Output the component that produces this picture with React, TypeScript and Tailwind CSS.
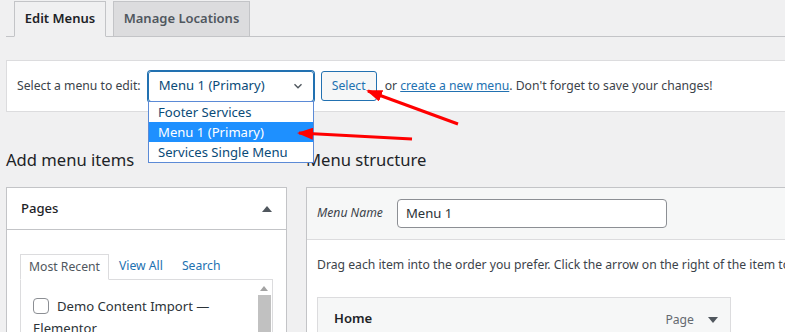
import React from 'react';

const TriUp = () => (
  <svg width="10" height="6" viewBox="0 0 10 6">
    <path d="M0 6 L5 0 L10 6 Z" fill="#50575e" />
  </svg>
);

const TriDown = () => (
  <svg width="10" height="6" viewBox="0 0 10 6">
    <path d="M0 0 L5 6 L10 0 Z" fill="#50575e" />
  </svg>
);

const Arrows = () => (
  <svg className="absolute left-0 top-0 pointer-events-none" width="785" height="332">
    <defs>
      <marker id="head" markerUnits="userSpaceOnUse" markerWidth="16" markerHeight="12" refX="14" refY="6" orient="auto">
        <path d="M0 0 L16 6 L0 12 Z" fill="#ff0000" />
      </marker>
    </defs>
    <line x1="458" y1="124" x2="368" y2="91" stroke="#ff0000" strokeWidth="3" markerEnd="url(#head)" />
    <line x1="412" y1="139" x2="299" y2="133" stroke="#ff0000" strokeWidth="3" markerEnd="url(#head)" />
  </svg>
);

const menus = ['Footer Services', 'Menu 1 (Primary)', 'Services Single Menu'];

export default function App() {
  return (
    <div className="relative w-[785px] h-[332px] overflow-hidden bg-[#f0f0f1] font-['Noto_Sans',sans-serif] text-[12.2px] text-[#3c434a]">
      <div className="pl-[6px] w-[840px]">
        {/* tabs */}
        <div className="flex items-end gap-[7px] pl-[8px] pt-[1px] border-b border-[#c3c4c7] h-[37px]">
          <div className="-mb-px h-[36px] w-[92px] justify-center flex items-center border border-[#c3c4c7] border-b-[#f0f0f1] bg-[#f0f0f1] text-[13px] font-semibold text-[#1d2327]">
            Edit Menus
          </div>
          <div className="-mb-px h-[36px] w-[137px] justify-center flex items-center border border-[#c3c4c7] bg-[#dcdcde] text-[13px] font-semibold text-[#50575e]">
            Manage Locations
          </div>
        </div>

        {/* select panel */}
        <div className="mt-[23px] h-[52px] flex items-center px-[10px] bg-white border border-[#dcdcde]">
          <span>Select a menu to edit:</span>
          <div className="ml-[7px] w-[166px] h-[31px] flex items-center justify-between pl-[10px] pr-[8px] rounded-[3px] border border-[#2271b1] shadow-[0_0_0_1px_#2271b1] text-[13.1px] text-[#0a4b78]">
            <span>Menu 1 (Primary)</span>
            <svg width="14" height="14" viewBox="0 0 20 20">
              <path d="M5 7.5 L10 12.5 L15 7.5" fill="none" stroke="#50575e" strokeWidth="2" />
            </svg>
          </div>
          <button className="ml-[7px] w-[56px] h-[30px] rounded-[3px] border border-[#2271b1] bg-[#f6f7f7] text-[#2271b1] text-[12.2px]">
            Select
          </button>
          <span className="ml-[8px] whitespace-nowrap">
            or{' '}
            <a className="text-[#2271b1] underline">create a new menu</a>. Don't forget to save your changes!
          </span>
        </div>

        {/* columns */}
        <div className="flex gap-[19px] mt-[36px]">
          <div className="w-[281px] shrink-0">
            <h2 className="text-[16.6px] leading-[24px] text-[#1d2327] mb-[15px]">Add menu items</h2>
            <div className="bg-white border border-[#c3c4c7]">
              <div className="h-[42px] flex items-center justify-between pl-[14px] pr-[14px] border-b border-[#c3c4c7]">
                <span className="text-[13.1px] font-medium text-[#1d2327]">Pages</span>
                <TriUp />
              </div>
              <div className="pt-[24px] px-[13px]">
                <div className="flex items-end h-[25px]">
                  <div className="-mb-px h-[26px] w-[89px] flex items-center justify-center border border-[#dcdcde] border-b-white bg-white text-[#50575e]">
                    Most Recent
                  </div>
                  <a className="ml-[10px] text-[#2271b1] h-[25px] flex items-center">View All</a>
                  <a className="ml-[19px] text-[#2271b1] h-[25px] flex items-center">Search</a>
                </div>
                <div className="flex border border-[#dcdcde] bg-white h-[80px]">
                  <div className="flex-1 pl-[12px] pt-[15px] text-[13.1px] leading-[22px] text-[#2c3338]">
                    <span className="inline-block align-middle w-[16px] h-[16px] rounded-[4px] border border-[#8c8f94] mr-[8px] -mt-[3px]" />
                    Demo Content Import —
                    <br />
                    Elementor
                  </div>
                  <div className="w-[14px] flex flex-col items-center pt-[6px] mr-[1px]">
                    <svg width="8" height="5" viewBox="0 0 8 5">
                      <path d="M0 5 L4 0 L8 5 Z" fill="#a3a3a3" />
                    </svg>
                    <div className="mt-[4px] w-[13px] flex-1 bg-[#c1c1c1]" />
                  </div>
                </div>
              </div>
            </div>
          </div>

          <div className="flex-1">
            <h2 className="text-[16.6px] leading-[24px] text-[#1d2327] mb-[15px]">Menu structure</h2>
            <div className="bg-white border border-[#c3c4c7]">
              <div className="h-[52px] flex items-center px-[10px] bg-[#f6f7f7] border-b border-[#dcdcde]">
                <span className="italic text-[#3c434a]">Menu Name</span>
                <div className="ml-[14px] w-[270px] h-[29px] flex items-center pl-[8px] rounded-[4px] border border-[#8c8f94] bg-white text-[13.1px] text-[#2c3338]">
                  Menu 1
                </div>
              </div>
              <div className="px-[10px] pt-[15px]">
                <p className="whitespace-nowrap leading-[20px]">
                  Drag each item into the order you prefer. Click the arrow on the right of the item to reveal additional configuration options.
                </p>
                <div className="mt-[22px] w-[414px] h-[50px] flex items-start justify-between pl-[16px] pr-[12px] pt-[11px] bg-[#f6f7f7] border border-[#dcdcde]">
                  <span className="text-[13.1px] font-semibold text-[#1d2327]">Home</span>
                  <div className="flex items-center gap-[14px] pt-[2px]">
                    <span className="text-[#646970]">Page</span>
                    <TriDown />
                  </div>
                </div>
              </div>
            </div>
          </div>
        </div>
      </div>

      {/* open dropdown */}
      <div className="absolute left-[148px] top-[101px] w-[166px] bg-white border border-[#5b8ad6] text-[13.1px] text-[#0a4b78]">
        {menus.map((m) => (
          <div
            key={m}
            className={
              m === 'Menu 1 (Primary)'
                ? 'h-[20px] leading-[20px] pl-[9px] bg-[#1e90ff] text-white'
                : 'h-[20px] leading-[20px] pl-[9px]'
            }
          >
            {m}
          </div>
        ))}
      </div>

      <Arrows />
    </div>
  );
}
